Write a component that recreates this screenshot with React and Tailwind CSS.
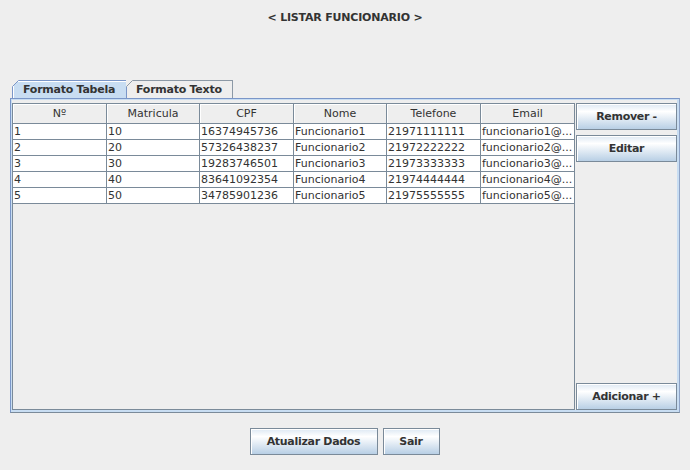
import React from "react";

const rows = [
  ["1", "10", "16374945736", "Funcionario1", "21971111111", "funcionario1@..."],
  ["2", "20", "57326438237", "Funcionario2", "21972222222", "funcionario2@..."],
  ["3", "30", "19283746501", "Funcionario3", "21973333333", "funcionario3@..."],
  ["4", "40", "83641092354", "Funcionario4", "21974444444", "funcionario4@..."],
  ["5", "50", "34785901236", "Funcionario5", "21975555555", "funcionario5@..."],
];

const headers = ["Nº", "Matricula", "CPF", "Nome", "Telefone", "Email"];
const widths = ["w-[94px] border-r", "w-[93px] border-r", "w-[94px] border-r", "w-[93px] border-r", "w-[94px] border-r", "w-[93px]"];

function Btn({ children, className = "" }) {
  return (
    <div
      className={
        "h-[27px] flex items-center justify-center pt-[2px] border border-[#7a8a99] shadow-[inset_1px_1px_0_#ffffff] bg-[linear-gradient(to_bottom,#dde8f3_0%,#ffffff_30%,#b8cfe5_100%)] font-bold text-[11px] tracking-[-0.3px] text-[#333333] " +
        className
      }
    >
      {children}
    </div>
  );
}

function Corner({ color }) {
  return (
    <svg className="absolute -top-px -left-px" width="7" height="7" viewBox="0 0 7 7">
      <polygon points="0,0 7,0 0,7" fill="#eeeeee" />
      <line x1="0.5" y1="6.5" x2="6.5" y2="0.5" stroke={color} strokeWidth="1" />
    </svg>
  );
}

export default function App() {
  return (
    <div
      className="w-[690px] h-[470px] bg-[#eeeeee] flex flex-col text-[#333333] overflow-hidden"
      style={{ fontFamily: '"DejaVu Sans", sans-serif' }}
    >
      <div className="h-[37px] flex items-center justify-center font-bold text-[11px] tracking-[-0.2px] text-[#333333]">
        &lt; LISTAR FUNCIONARIO &gt;
      </div>

      <div className="ml-[10px] mt-[43px] w-[670px]">
        <div className="flex ml-[2px] h-[18px]">
          <div className="relative w-[115px] h-[18px] border-t border-l border-r border-[#7a96c8] bg-[#c8ddf2] shadow-[inset_1px_1px_0_#ffffff] flex items-center pl-[10px] pt-[1px] font-bold text-[11px] tracking-[-0.25px] text-[#333333]">
            <Corner color="#7a96c8" />
            Formato Tabela
          </div>
          <div className="relative w-[106px] h-[18px] border-t border-r border-[#8c99a6] bg-[#eeeeee] flex items-center pl-[9px] pt-[1px] font-bold text-[11px] tracking-[-0.25px] text-[#333333]">
            <Corner color="#8c99a6" />
            Formato Texto
          </div>
        </div>

        <div className="border border-[#7a96c8] border-b-[#7a8a99] border-r-[#8ea3c6]">
          <div className="border-t border-l border-r-2 border-b-2 border-[#c8ddf2]">
            <div className="bg-[#eeeeee] pt-[3px] flex gap-[1px]">
              <div className="w-[563px] h-[307px] border border-[#7a8a99] bg-[#eeeeee] flex flex-col">
                <div className="flex h-[20px] border-b border-[#7a8a99] bg-[#eeeeee]">
                  {headers.map((h, i) => (
                    <div
                      key={h}
                      className={widths[i] + " border-[#7a8a99] flex items-center justify-center pt-[1px] text-[11px] text-[#333333] shadow-[inset_1px_1px_0_#ffffff]"}
                    >
                      {h}
                    </div>
                  ))}
                </div>
                {rows.map((r, ri) => (
                  <div key={ri} className="flex h-[16px] border-b border-[#7a8a99] bg-white">
                    {r.map((c, i) => (
                      <div
                        key={i}
                        className={widths[i] + " border-[#7a8a99] flex items-center pl-[1px] pt-[1px] text-[11px] text-[#333333] whitespace-nowrap overflow-hidden"}
                      >
                        {c}
                      </div>
                    ))}
                  </div>
                ))}
              </div>
              <div className="w-[101px] flex flex-col">
                <Btn>Remover -</Btn>
                <Btn className="mt-[5px]">Editar</Btn>
                <div className="flex-1" />
                <Btn>Adicionar +</Btn>
              </div>
            </div>
          </div>
        </div>
      </div>

      <div className="mt-[15px] flex justify-center gap-[5px] pr-[1px]">
        <Btn className="w-[128px]">Atualizar Dados</Btn>
        <Btn className="w-[57px]">Sair</Btn>
      </div>
    </div>
  );
}
